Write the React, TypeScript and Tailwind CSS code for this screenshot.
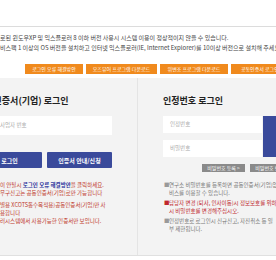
export default function App() {
  return (
    <div className="h-[260px] w-[276px] overflow-hidden bg-white font-['Noto_Sans_CJK_KR','Noto_Sans',sans-serif]">
      <div className="h-[27px] border-b border-[#dcdcdc]" />

      <div className="whitespace-nowrap pt-[6px] text-[6px] leading-[10px] text-[#444]">
        <div>로된 윈도우XP 및 익스플로러 8 이하 버전 사용시 시스템 이용이 정상적이지 않을 수 있습니다.</div>
        <div>비스팩 1 이상의 OS 버전을 설치하고 인터넷 익스플로러(IE, Internet Explorer)를 10이상 버전으로 설치해 주세요.</div>
      </div>

      <div className="mt-[11px] flex gap-[3px] pl-[25px]">
        <OrangeBtn w="w-[58px]">로그인 오류 해결방안</OrangeBtn>
        <OrangeBtn w="w-[71px]">오즈뷰어 프로그램 다운로드</OrangeBtn>
        <OrangeBtn w="w-[68px]">위변조 프로그램 다운로드</OrangeBtn>
        <OrangeBtn w="w-[68px]">공동인증서 로그인 안내</OrangeBtn>
      </div>

      <div className="mt-[4px] flex h-[178px] border-b border-[#e0e0e0] bg-[#f3f3f3]">
        {/* 공동인증서 로그인 */}
        <div className="-ml-[23px] w-[161px] shrink-0 border-r border-[#e4e4e4] pt-[17px]">
          <div className="w-[135px]">
            <h2 className="whitespace-nowrap text-[9px] font-bold leading-[12px] text-[#222]">공동인증서(기업) 로그인</h2>
            <div className="mt-[9px] flex h-[19px] items-center bg-white pl-[23px] text-[5.5px] text-[#aaa]">사업자 번호</div>
            <div className="mt-[17px] flex gap-[5px]">
              <NavyBtn>로그인</NavyBtn>
              <NavyBtn>인증서 안내/신청</NavyBtn>
            </div>
            <div className="ml-[23px] mt-[13px] whitespace-nowrap text-[5.5px] leading-[8px] text-[#c0392b]">
              <div>
                이 안될시 <b className="text-[#1f2f9a]">로그인 오류 해결방안</b>을 클릭하세요.
              </div>
              <div>무구신고는 공동인증서(기업)로만 가능합니다</div>
              <div className="mt-[4px]">별용 XCOTS통수목적용)공동인증서(기업)만 사</div>
              <div>용합니다</div>
              <div>러시스템에서 사용가능한 인증서만 보입니다.</div>
            </div>
          </div>
        </div>

        {/* 인정번호 로그인 */}
        <div className="shrink-0 pl-[25px] pt-[17px]">
          <h2 className="whitespace-nowrap text-[9px] font-bold leading-[12px] text-[#222]">인정번호 로그인</h2>
          <div className="mt-[9px] flex gap-[1px]">
            <div className="flex w-[99px] flex-col gap-[7px]">
              <div className="flex h-[17px] items-center bg-white pl-[7px] text-[5.5px] text-[#aaa]">인정번호</div>
              <div className="flex h-[17px] items-center bg-white pl-[7px] text-[5.5px] text-[#aaa]">비밀번호</div>
            </div>
            <div className="flex h-[41px] w-[50px] items-center justify-center bg-[#3a4a9b] text-[6px] font-bold text-white">로그인</div>
          </div>
          <div className="ml-[39px] mt-[7px] flex gap-[5px]">
            <GrayBtn>비밀번호 등록 &gt;</GrayBtn>
            <GrayBtn>비밀번호 변경 &gt;</GrayBtn>
          </div>
          <div className="ml-[1px] mt-[9px] flex w-[140px] flex-col gap-[2px] whitespace-nowrap text-[5.5px] leading-[8px] text-[#777]">
            <Note>
              <div>연구소 비밀번호를 등록하면 공동인증서(기업)없이 서</div>
              <div>비스를 이용할 수 있습니다.</div>
            </Note>
            <Note red>
              <div>담당자 변경 (퇴사, 인사이동)시 정보보호를 위하여 반드</div>
              <div>시 비밀번호를 변경해주십시오.</div>
            </Note>
            <Note>
              <div>인정번호로 로그인시 신규신고, 자진취소 등 일</div>
              <div>부 제한됩니다.</div>
            </Note>
          </div>
        </div>
      </div>
    </div>
  );
}

function OrangeBtn({ w, children }: { w: string; children: React.ReactNode }) {
  return (
    <div className={`${w} flex h-[10px] shrink-0 items-center justify-center whitespace-nowrap bg-[#f08a1d] text-[5px] text-white`}>
      {children}
    </div>
  );
}

function NavyBtn({ children }: { children: React.ReactNode }) {
  return (
    <div className="flex h-[16px] w-[65px] items-center justify-center rounded-[1px] bg-[#3a4a9b] text-[6px] font-bold text-white">
      {children}
    </div>
  );
}

function GrayBtn({ children }: { children: React.ReactNode }) {
  return (
    <div className="flex h-[8px] w-[43px] shrink-0 items-center justify-center whitespace-nowrap bg-[#8a8a8a] text-[5px] text-white">
      {children}
    </div>
  );
}

function Note({ red, children }: { red?: boolean; children: React.ReactNode }) {
  return (
    <div className={`flex ${red ? 'text-[#c0272d]' : ''}`}>
      <span className={`w-[5px] shrink-0 ${red ? 'text-[#c0272d]' : 'text-[#999]'}`}>■</span>
      <div>{children}</div>
    </div>
  );
}
